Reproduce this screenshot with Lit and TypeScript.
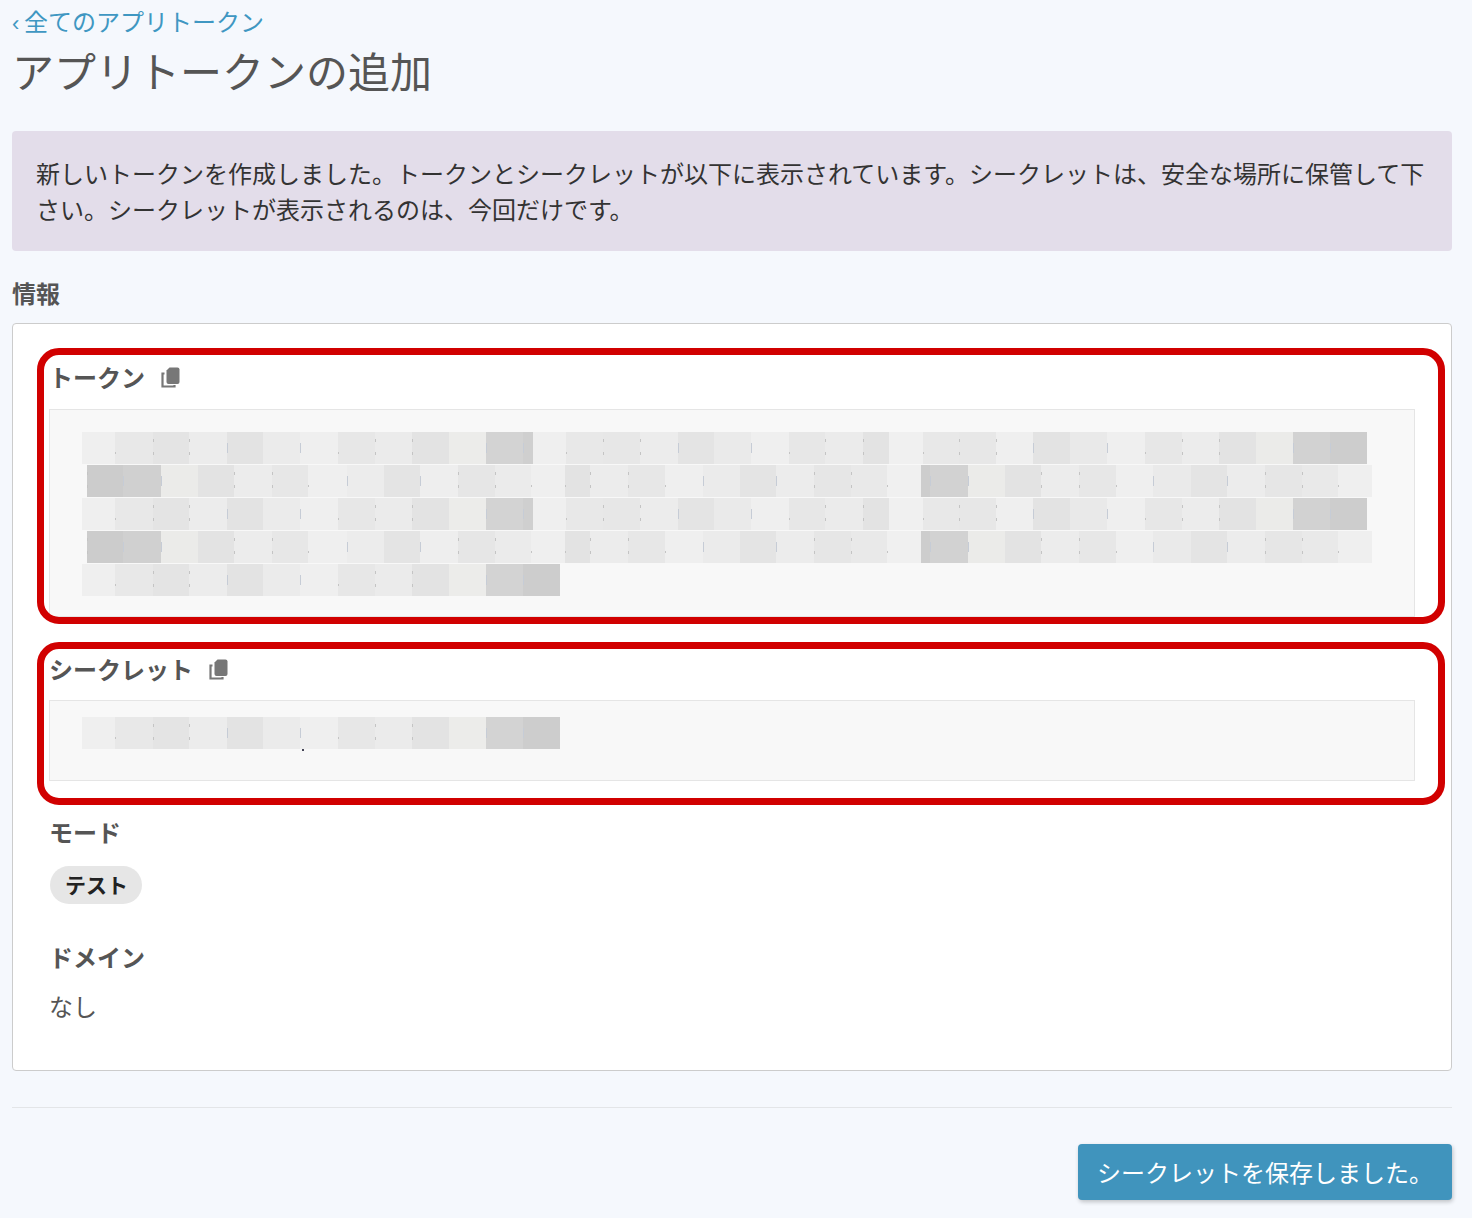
import { LitElement, html, css } from "lit";
import { customElement } from "lit/decorators.js";

type Seg = [number, string, string];

const A: Seg[] = [
  [82, "efefef", ""], [115, "e8e8e8", "d"], [153, "e4e4e4", "c"], [189, "ececec", "c"], [227, "e3e3e3", "l"], [263, "ebebeb", ""],
  [300, "efefef", "l"], [338, "e7e7e7", "d"], [375, "ebebeb", "c"], [412, "e3e3e3", "c"], [449, "ececea", ""], [486, "d3d3d3", "l"],
  [523, "cfcfcf", "l"], [533, "efefef", ""], [566, "e8e8e8", "d"], [603, "e7e7e7", "c"], [640, "ececec", "c"], [678, "e4e4e4", "l"],
  [714, "eaeaea", ""], [751, "efefef", "l"], [789, "e7e7e7", "d"], [825, "ebebeb", "c"], [863, "e3e3e3", "c"], [889, "f0f0f0", ""],
  [923, "e8e8e8", "d"], [959, "e7e7e7", "c"], [996, "efefef", "c"], [1033, "e3e3e3", "l"], [1070, "e9e9e9", ""], [1107, "efefef", "l"],
  [1145, "e7e7e7", "d"], [1182, "ececec", "c"], [1219, "e3e3e3", "c"], [1256, "ebebe9", ""], [1293, "d2d2d2", "l"], [1330, "cdcdcd", "l"],
];
const AEnd = 1367;

const B: Seg[] = [
  [87, "cccccc", "c"], [123, "d0d0d0", "l"], [161, "ebebe9", "l"], [198, "e3e3e3", ""], [234, "ececec", "c"], [272, "e7e7e7", "c"],
  [308, "efefef", "d"], [347, "ececec", "l"], [384, "e4e4e4", ""], [420, "eeeeee", "l"], [458, "e6e6e6", "c"], [495, "ebebeb", "c"],
  [531, "efefef", "d"], [565, "e3e3e3", "d"], [590, "ececec", "c"], [628, "e7e7e7", "c"], [665, "efefef", "d"], [703, "ebebeb", "l"],
  [740, "e4e4e4", ""], [776, "ececec", "l"], [814, "e6e6e6", "c"], [851, "e9e9e9", "c"], [887, "f0f0f0", "d"], [921, "cdcdcd", ""],
  [930, "d2d2d2", "l"], [968, "ebebe9", "l"], [1005, "e3e3e3", ""], [1041, "ececec", "c"], [1079, "e7e7e7", "c"], [1116, "efefef", "d"],
  [1153, "eaeaea", "l"], [1191, "e4e4e4", ""], [1227, "ececec", "l"], [1265, "e6e6e6", "c"], [1302, "e9e9e9", "c"], [1338, "efefef", "d"],
];
const BEnd = 1372;

const SHORT: Seg[] = [...A.slice(0, 12), [523, "cdcdcd", "l"]];
const ShortEnd = 560;

const BOX_ORIGIN = 82;

@customElement("app-root")
export class AppRoot extends LitElement {
  static styles = css`
    :host {
      display: block;
      min-height: 1218px;
      box-sizing: border-box;
      background: #f5f8fd;
      padding: 3px 20px 18px 12px;
      font-family: "Noto Sans CJK JP", "Noto Sans", sans-serif;
      font-size: 24px;
      line-height: 36px;
      color: #555;
    }
    .back {
      display: block;
      color: #3f97c2;
      text-decoration: none;
    }
    .chev {
      display: inline-block;
      width: 12px;
      font-size: 22px;
      font-family: "Liberation Sans", sans-serif;
    }
    h1 {
      margin: 6px 0 39px;
      font-size: 42px;
      line-height: 44px;
      font-weight: 400;
      color: #555;
    }
    .alert {
      background: #e3ddea;
      border-radius: 4px;
      padding: 24px;
      color: #333;
    }
    .section {
      margin: 24px 0 12px;
      font-weight: 700;
      color: #555;
    }
    .card {
      position: relative;
      background: #fff;
      border: 1px solid #ccc;
      border-radius: 4px;
      padding: 36px 36px 45px;
    }
    .label {
      display: flex;
      align-items: center;
      gap: 16px;
      height: 36px;
      box-sizing: border-box;
      padding-bottom: 2px;
      font-weight: 700;
      color: #555;
    }
    .label.secret-label {
      margin-top: 35px;
    }
    .label svg {
      display: block;
      flex: none;
    }
    .code {
      position: relative;
      background: #f8f8f8;
      border: 1px solid #e5e5e5;
      display: flex;
      flex-direction: column;
      gap: 1px;
      padding-left: 32px;
    }
    .code.token {
      margin-top: 13px;
      padding-top: 22px;
      padding-bottom: 20px;
    }
    .code.secret {
      margin-top: 12px;
      padding-top: 16px;
      padding-bottom: 31px;
    }
    .row {
      display: flex;
      height: 32px;
    }
    .cell {
      position: relative;
      flex: none;
      height: 100%;
    }
    .cell.d::before,
    .cell.c::before,
    .cell.l::before {
      content: "";
      position: absolute;
      left: 0;
      width: 1px;
    }
    .cell.d::before {
      top: 20px;
      height: 2px;
      background: #c4c4c4;
    }
    .cell.c::before {
      top: 7px;
      height: 16px;
      background: linear-gradient(#c4c4c4 0 3px, transparent 3px 13px, #c4c4c4 13px);
    }
    .cell.l::before {
      top: 11px;
      height: 10px;
      background: #c6ccd6;
    }
    .speck {
      position: absolute;
      left: 252px;
      top: 48px;
      width: 2px;
      height: 2px;
      background: #445;
    }
    .mode {
      margin-top: 34px;
    }
    .pill {
      display: inline-block;
      margin: 15px 0 0 1px;
      height: 38px;
      line-height: 36px;
      padding: 0 14px 0 15px;
      border-radius: 19px;
      background: #e6e6e6;
      color: #222;
      font-size: 21px;
      font-weight: 700;
    }
    .pillrow {
      display: flex;
    }
    .domain {
      margin-top: 36px;
    }
    .value {
      margin-top: 12px;
      padding-bottom: 1px;
    }
    .mark {
      position: absolute;
      left: 24px;
      width: 1408px;
      box-sizing: border-box;
      border: 7px solid #d10000;
      border-radius: 22px;
      pointer-events: none;
    }
    .mark.one {
      top: 24px;
      height: 276px;
    }
    .mark.two {
      top: 318px;
      height: 163px;
    }
    hr {
      border: 0;
      border-top: 1px solid #e3e5e8;
      margin: 36px 0 36px;
    }
    .actions {
      display: flex;
      justify-content: flex-end;
    }
    button {
      height: 56px;
      width: 374px;
      padding: 0;
      border: 0;
      border-radius: 4px;
      background: #4094bd;
      color: #fff;
      font: inherit;
      box-shadow: 1px 2px 4px rgba(0, 0, 0, 0.22);
    }
  `;

  private row(segs: Seg[], end: number) {
    const offset = segs[0][0] - BOX_ORIGIN;
    return html`<div class="row" style="margin-left:${offset}px">
      ${segs.map(([x, shade, tick], i) => {
        const next = i + 1 < segs.length ? segs[i + 1][0] : end;
        return html`<span
          class="cell ${tick}"
          style="width:${next - x}px;background:#${shade}"
        ></span>`;
      })}
    </div>`;
  }

  private copyIcon() {
    return html`<svg width="20" height="21" viewBox="0 0 20 21" aria-hidden="true">
      <path d="M3.5 6.5H1.5V19.5H13.5V18" fill="none" stroke="#777" stroke-width="2.2" />
      <path
        d="M8.5 0.5H16.5Q18.5 0.5 18.5 2.5V15Q18.5 17 16.5 17H7.5Q5.5 17 5.5 15V3.5Z"
        fill="#777"
      />
    </svg>`;
  }

  render() {
    return html`
      <a class="back" href="#"><span class="chev">‹</span>全てのアプリトークン</a>
      <h1>アプリトークンの追加</h1>
      <div class="alert">
        新しいトークンを作成しました。トークンとシークレットが以下に表示されています。シークレットは、安全な場所に保管して下さい。シークレットが表示されるのは、今回だけです。
      </div>
      <div class="section">情報</div>
      <div class="card">
        <div class="label">トークン ${this.copyIcon()}</div>
        <div class="code token">
          ${this.row(A, AEnd)} ${this.row(B, BEnd)} ${this.row(A, AEnd)} ${this.row(B, BEnd)}
          ${this.row(SHORT, ShortEnd)}
        </div>
        <div class="label secret-label">シークレット ${this.copyIcon()}</div>
        <div class="code secret">
          ${this.row(SHORT, ShortEnd)}
          <span class="speck"></span>
        </div>
        <div class="label mode">モード</div>
        <div class="pillrow"><span class="pill">テスト</span></div>
        <div class="label domain">ドメイン</div>
        <div class="value">なし</div>
        <div class="mark one"></div>
        <div class="mark two"></div>
      </div>
      <hr />
      <div class="actions">
        <button>シークレットを保存しました。</button>
      </div>
    `;
  }
}
